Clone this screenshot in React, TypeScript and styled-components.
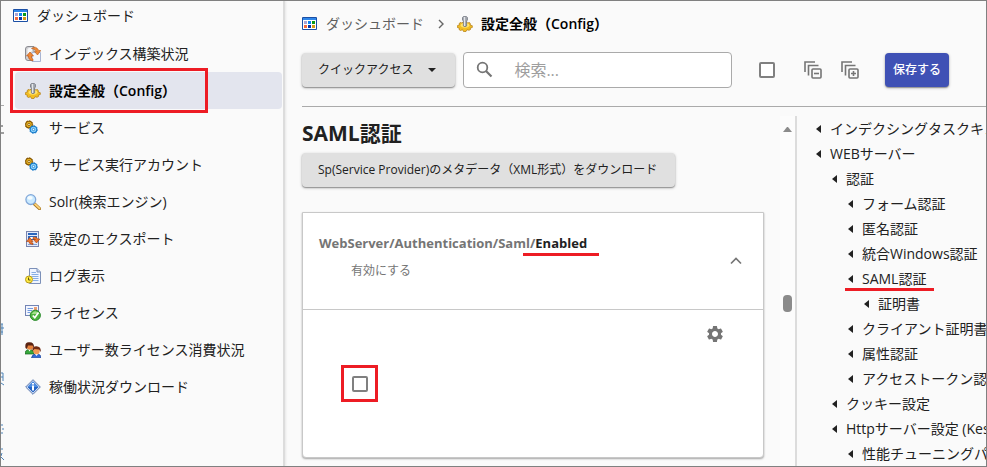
import React from "react";
import styled, { createGlobalStyle } from "styled-components";

const GlobalStyle = createGlobalStyle`
  *, *::before, *::after { box-sizing: border-box; }
  body { margin: 0; }
  body, button, input {
    font-family: "Open Sans", "Noto Sans CJK JP", sans-serif;
    font-size: 14px;
    line-height: 20px;
  }
`;

const Shell = styled.div`
  display: flex;
  height: 100vh;
  overflow: hidden;
  border: 1px solid #808080;
  background: #fafafa;
  color: #212121;
`;

/* ---------- page edge behind the drawer ---------- */

const Edge = styled.div`
  display: flex;
  flex-direction: column;
  flex: none;
  width: 3px;
  padding-top: 104px;
  overflow: hidden;
`;
const EdgeRule = styled.div`
  flex: none;
  height: 1px;
  margin-bottom: 13px;
  background: #aaa;
`;
const EdgeMark = styled.svg`
  flex: none;
  display: block;
`;

/* ---------- drawer ---------- */

const Drawer = styled.nav`
  flex: none;
  width: 281px;
  padding: 0 1px 0 11px;
  border-right: 2px solid #dcdcdc;
  box-shadow: 1px 0 2px rgba(0, 0, 0, 0.08);
`;
const NavHome = styled.a`
  display: flex;
  align-items: center;
  gap: 8px;
  height: 34px;
  padding-bottom: 4px;
  margin-left: -2px;
  color: inherit;
  text-decoration: none;
`;
const NavItem = styled.a<{ $active?: boolean }>`
  position: relative;
  display: flex;
  align-items: center;
  gap: 8px;
  height: 37px;
  padding-left: 10px;
  border-radius: 4px;
  color: ${(p) => (p.$active ? "#000" : "inherit")};
  font-weight: ${(p) => (p.$active ? 600 : 400)};
  background: ${(p) => (p.$active ? "#e3e5ee" : "transparent")};
  text-decoration: none;
  white-space: nowrap;
`;
const NavMarker = styled.span`
  position: absolute;
  left: -5px;
  top: -4px;
  width: 198px;
  height: 45px;
  border: 3px solid #ed1c24;
`;

/* ---------- main ---------- */

const Main = styled.main`
  display: flex;
  flex-direction: column;
  flex: 1;
  min-width: 0;
  padding-left: 17px;
`;
const Crumbs = styled.div`
  display: flex;
  align-items: center;
  height: 46px;
`;
const Crumb = styled.a<{ $current?: boolean }>`
  display: flex;
  align-items: center;
  gap: 8px;
  color: ${(p) => (p.$current ? "#000" : "#5f5f5f")};
  font-weight: ${(p) => (p.$current ? 600 : 400)};
  text-decoration: none;
`;
const CrumbSep = styled.svg`
  margin: 0 12px 0 13px;
`;
const Toolbar = styled.div`
  display: flex;
  align-items: center;
  height: 60px;
  padding: 0 37px 13px 0;
  border-bottom: 1px solid #aaa;
`;
const Button = styled.button<{ $primary?: boolean }>`
  display: flex;
  flex: none;
  align-items: center;
  gap: 14px;
  height: 34px;
  padding: ${(p) => (p.$primary ? "0 8px" : "0 18px 0 16px")};
  border: 0;
  border-radius: 4px;
  background: ${(p) => (p.$primary ? "#3f51b5" : "#e0e0e0")};
  color: ${(p) => (p.$primary ? "#fff" : "#212121")};
  font-size: 12px;
  font-weight: ${(p) => (p.$primary ? 500 : 400)};
  white-space: nowrap;
  box-shadow: 0 1px 3px rgba(0, 0, 0, 0.3), 0 1px 1px rgba(0, 0, 0, 0.25);
`;
const SearchBox = styled.label`
  display: flex;
  flex: 1;
  align-items: center;
  gap: 20px;
  min-width: 0;
  height: 36px;
  margin: 0 27px 0 8px;
  padding: 0 12px;
  border: 1px solid #aaa;
  border-radius: 4px;
  background: #fff;
`;
const SearchInput = styled.input`
  flex: 1;
  min-width: 0;
  padding: 0;
  border: 0;
  outline: 0;
  background: transparent;
  font-size: 16px;
  line-height: 24px;
  &::placeholder { color: #9e9e9e; opacity: 1; }
`;
const Check = styled.input.attrs({ type: "checkbox" })`
  appearance: none;
  flex: none;
  width: 16px;
  height: 16px;
  margin: 0;
  border: 2px solid #808080;
  border-radius: 2px;
  background: #fff;
`;
const IconButton = styled.button`
  display: flex;
  padding: 0;
  border: 0;
  background: transparent;
  color: #757575;
`;
const ToolIcons = styled.div`
  display: flex;
  flex: none;
  align-items: center;
  gap: 19px;
  margin: 0 26px 0 29px;
`;

const Columns = styled.div`
  display: flex;
  flex: 1;
  min-height: 0;
  padding-top: 9px;
`;
const Content = styled.section`
  flex: 1;
  min-width: 0;
  padding-top: 2px;
`;
const Title = styled.h1`
  margin: 0 0 5px;
  font-size: 21px;
  line-height: 30px;
  font-weight: 700;
`;
const Card = styled.article`
  margin: 25px 16px 0 0;
  border: 1px solid #c8c8c8;
  border-radius: 0 0 4px 4px;
  background: #fff;
  box-shadow: 0 1px 2px rgba(0, 0, 0, 0.35);
`;
const CardHead = styled.header`
  display: flex;
  align-items: center;
  justify-content: space-between;
  height: 97px;
  padding: 0 20px 0 16px;
  border-bottom: 1px solid #c8c8c8;
`;
const CardText = styled.div`
  padding-bottom: 8px;
`;
const Path = styled.h2`
  margin: 0;
  color: #757575;
  font-size: 13px;
  line-height: 20px;
  font-weight: 700;
`;
const PathLeaf = styled.span`
  position: relative;
  color: #212121;
`;
const LeafMarker = styled.span`
  position: absolute;
  left: -12px;
  right: -12px;
  top: 19px;
  height: 3px;
  background: #ed1c24;
`;
const Hint = styled.p`
  margin: 8px 0 0 32px;
  color: #757575;
  font-size: 12px;
`;
const CardBody = styled.div`
  display: flex;
  justify-content: space-between;
  align-items: flex-start;
  height: 147px;
  padding: 14px 38px 0;
`;
const CheckMarker = styled.label`
  display: flex;
  align-items: center;
  justify-content: center;
  width: 37px;
  height: 37px;
  margin-top: 41px;
  border: 3px solid #ed1c24;
`;

const ScrollTrack = styled.div`
  display: flex;
  flex: none;
  flex-direction: column;
  align-items: center;
  width: 15px;
  padding-top: 11px;
  background: #fcfcfc;
`;
const Gap = styled.div<{ $grow: number }>`
  flex: ${(p) => p.$grow} 0 0;
`;
const Thumb = styled.div`
  flex: none;
  width: 9px;
  height: 17px;
  border-radius: 4px;
  background: #8b8b8b;
`;

const Tree = styled.ul`
  flex: none;
  width: 191px;
  margin: 0;
  padding: 0 0 0 18px;
  border-left: 2px solid #dcdcdc;
  overflow: hidden;
  list-style: none;
`;
const TreeRow = styled.li<{ $level: number }>`
  padding-left: ${(p) => p.$level * 16}px;
`;
const TreeLink = styled.a`
  position: relative;
  display: inline-flex;
  align-items: center;
  gap: 8px;
  height: 25px;
  color: inherit;
  text-decoration: none;
  white-space: nowrap;
`;
const TreeMarker = styled.span`
  position: absolute;
  left: -2px;
  right: -8px;
  bottom: 0;
  height: 3px;
  background: #ed1c24;
`;

/* ---------- icons ---------- */

const Svg = ({ children, w = 16, h = 16 }: { children: React.ReactNode; w?: number; h?: number }) => (
  <svg width={w} height={h} viewBox={`0 0 ${w} ${h}`} aria-hidden="true">
    {children}
  </svg>
);

const DashboardIcon = () => (
  <Svg>
    <rect x="0" y="1" width="15" height="13" rx="1" fill="#1b4fa5" />
    <rect x="1" y="2" width="13" height="2" fill="#2f86e8" />
    <rect x="1" y="4" width="13" height="9" fill="#fff" />
    <rect x="2" y="5" width="3" height="3" fill="#a9a3d4" />
    <rect x="6" y="5" width="3" height="3" fill="#0a84f0" />
    <rect x="10" y="5" width="3" height="3" fill="#0a9a16" />
    <rect x="2" y="9" width="3" height="3" fill="#f56a3d" />
    <rect x="6" y="9" width="3" height="3" fill="#0736a8" />
    <rect x="10" y="9" width="3" height="3" fill="#d59b14" />
  </Svg>
);
const IndexIcon = () => (
  <Svg>
    <path d="M.5 3Q.5 .5 3 .5H9V14.500H3Q.5 14.500 .5 12Z" fill="#d0d0d3" stroke="#8a8a90" />
    <path d="M2.500 3.500Q3 1.500 7 1.500V5L2.500 9Z" fill="#f7f7f8" />
    <path d="M7 6.500H15.500V15.500H7Z" fill="#f2f6ff" stroke="#a9b5d3" />
    <path d="M6.500 2.500Q11-.8 13.800 4.500H15.800L12.500 9 9.500 5.500H11.300Q10 2.500 6.500 2.500Z" fill="#ef8a38" stroke="#b75716" strokeWidth=".6" />
    <path d="M8 14.800Q3 14 3.500 10H1.500L5 6 8.500 10H6.500Q6 12.500 8 13.200Z" fill="#ef8a38" stroke="#b94f12" strokeWidth=".6" />
  </Svg>
);
const ConfigIcon = () => (
  <Svg>
    <path
      d="M3 6.500L5 7 6 6H9.500L10.500 7 12.500 6.500 13.500 8 13 9 15.300 9.700V11.500L13.300 12 13.500 13.500 12 14.300 10 13.700 9 15.500H6.500L5.500 13.700 3.500 14.500 2 13.500 2.300 12 .3 11.500V9.700L2.500 9 2 8Z"
      fill="#f2bd22"
      stroke="#b27a10"
      strokeWidth=".7"
    />
    <ellipse cx="8" cy="9.300" rx="4.300" ry="2.400" fill="#ffe36d" />
    <path d="M6.400 10V5L5.500 4V1.500L6.500 .4H9.300L10.400 1.500V4L9.600 5V10Q8 11.300 6.400 10Z" fill="#a4a8b0" stroke="#70747d" strokeWidth=".8" />
    <path d="M7.500 1V10" stroke="#e4e6ea" strokeWidth="1.200" />
  </Svg>
);
const ServiceIcon = () => (
  <Svg>
    <circle cx="4" cy="4.500" r="3.300" fill="#e8b321" stroke="#825300" strokeWidth="1.100" />
    <circle cx="4" cy="4.500" r="3.900" fill="none" stroke="#946408" strokeWidth=".8" strokeDasharray="1.500 1.500" />
    <circle cx="4" cy="4.500" r="1.200" fill="#fff1bc" stroke="#825300" strokeWidth=".8" />
    <circle cx="8.500" cy="9.500" r="3.300" fill="#8bd3fd" stroke="#1478c8" strokeWidth="1.100" />
    <circle cx="8.500" cy="9.500" r="3.900" fill="none" stroke="#1478c8" strokeWidth=".8" strokeDasharray="1.500 1.500" />
    <circle cx="8.500" cy="9.500" r="1.200" fill="#effaff" stroke="#1478c8" strokeWidth=".8" />
  </Svg>
);
const SolrIcon = () => (
  <Svg>
    <path d="M9.500 10L14.500 14.700" stroke="#ac7920" strokeWidth="3.200" strokeLinecap="round" />
    <path d="M10 10.200L14.500 14.400" stroke="#ffd67c" strokeWidth="1.700" strokeLinecap="round" />
    <circle cx="5.800" cy="5.600" r="4.900" fill="#c9e9ff" stroke="#82a8d9" strokeWidth="1.300" />
    <ellipse cx="5" cy="3.900" rx="2.700" ry="1.800" fill="#f5fcff" />
  </Svg>
);
const ExportIcon = () => (
  <Svg>
    <rect x="1.500" y=".5" width="12" height="15" fill="#e4eafa" stroke="#7884ad" />
    <rect x="3" y="2" width="9" height="2" fill="#2b66bd" />
    <rect x="3" y="5" width="9" height="4" fill="#2b66bd" />
    <rect x="5" y="6" width="5" height="2" fill="#fff" />
    <rect x="3" y="13" width="9" height="1" fill="#7fa3dc" />
    <path d="M8 6.500Q11.500 5 12.500 8H14.800L11.500 12 8.500 8.500H10.500Q10 7.500 8 8Z" fill="#ed752d" stroke="#a43e0c" strokeWidth=".6" />
    <path d="M8 13.500Q4 13.500 3.700 10.500H1.500L4.800 6.500 8 10.500H6.200Q6.200 12 8 12Z" fill="#ed752d" stroke="#a43e0c" strokeWidth=".6" />
  </Svg>
);
const LogIcon = () => (
  <Svg>
    <path d="M4.500 .5H12L15.500 4V15.500H4.500Z" fill="#f0f5ff" stroke="#7c90b8" />
    <path d="M12 .5V4H15.500" fill="#c5d6f1" stroke="#7c90b8" />
    <path d="M6.500 4.500H11M6.500 6.500H13.500M6.500 8.500H13.500M8 10.500H13.500M8 12.500H13.500" stroke="#87aee4" />
    <circle cx="4" cy="11.500" r="3.500" fill="#ffeb43" stroke="#b89b16" />
    <path d="M3.500 9.500V12H5.500" fill="none" stroke="#5f5412" />
  </Svg>
);
const LicenseIcon = () => (
  <Svg>
    <rect x=".5" y=".5" width="13" height="10" fill="#f3f6ff" stroke="#7384b4" />
    <path d="M2.500 3.500H8M2.500 5.500H7M2.500 7.500H5" stroke="#739bde" />
    <rect x="9" y="2" width="3" height="3" fill="#ec9e76" />
    <circle cx="10.300" cy="10.300" r="5.100" fill="#4db43f" stroke="#278729" />
    <path d="M6.500 9Q10 3.500 14 9Z" fill="#a3df8c" />
    <path d="M7.800 10.500L9.800 12.700 13.500 7.500" fill="none" stroke="#fff" strokeWidth="1.700" />
  </Svg>
);
const UsersIcon = () => (
  <Svg>
    <path d="M0 12Q0 7.500 4.500 7.500T9 12Z" fill="#37a83c" stroke="#17611d" strokeWidth=".7" />
    <path d="M3 7L4.500 9.500 6 7" fill="#fff" />
    <circle cx="5" cy="4.500" r="3.200" fill="#e9823b" />
    <path d="M.5 6Q-.5 0 4 .3Q9.500-.2 9 6L7.500 3.500 3 3.500 1.800 7Z" fill="#592312" />
    <path d="M6.500 15.800Q7 12 11.500 12T16 15.800Z" fill="#316bd7" stroke="#173e92" strokeWidth=".7" />
    <path d="M10 12L11.500 14 13 12" fill="#fff" />
    <circle cx="11.500" cy="9" r="3.200" fill="#f39a52" />
    <path d="M7.500 9.500Q6.800 4 11.500 4.200T15.800 10L14 7.500 9.500 7Z" fill="#732b12" />
  </Svg>
);
const StatusIcon = () => (
  <Svg>
    <path d="M8 .7L15.300 8 8 15.300 .7 8Z" fill="#fff" stroke="#5272ad" strokeLinejoin="round" />
    <path d="M8 2.300L13.700 8 8 13.700 2.300 8Z" fill="#2463c4" />
    <path d="M8 2.300L13.700 8H2.300Z" fill="#4c8be0" />
    <path d="M8 4V5.500M8 6.500V11.500" stroke="#fff" strokeWidth="2" />
  </Svg>
);
const StackIcon = ({ plus }: { plus?: boolean }) => (
  <Svg w={18} h={18}>
    <g fill="none" stroke="currentColor" strokeWidth="1.600">
      <path d="M1 11V1H11M4.500 14.500V4.500H14.500" />
      <rect x="8" y="8" width="9" height="9" rx="1" />
      <path d={plus ? "M10 12.500H15M12.500 10V15" : "M10 12.500H15"} />
    </g>
  </Svg>
);
const GearIcon = () => (
  <svg width="20" height="20" viewBox="0 0 24 24" aria-hidden="true">
    <path
      fill="currentColor"
      d="M19.140 12.940c.04-.3.060-.61.060-.94 0-.32-.02-.64-.07-.94l2.030-1.580c.18-.14.23-.41.12-.61l-1.920-3.320c-.12-.22-.37-.29-.59-.22l-2.390.96c-.5-.38-1.030-.7-1.620-.94l-.36-2.540c-.04-.24-.24-.41-.48-.41h-3.840c-.24 0-.43.17-.47.41l-.36 2.540c-.59.24-1.130.57-1.620.94l-2.390-.96c-.22-.08-.47 0-.59.22L2.740 8.870c-.12.21-.08.47.12.61l2.030 1.580c-.05.3-.09.63-.09.94s.02.64.07.94l-2.030 1.580c-.18.14-.23.41-.12.61l1.920 3.320c.12.22.37.29.59.22l2.390-.96c.5.38 1.030.7 1.620.94l.36 2.540c.05.24.24.41.48.41h3.840c.24 0 .44-.17.47-.41l.36-2.540c.59-.24 1.130-.56 1.620-.94l2.390.96c.22.08.47 0 .59-.22l1.920-3.320c.12-.22.07-.47-.12-.61zM12 15.600c-1.980 0-3.600-1.620-3.600-3.600s1.620-3.600 3.600-3.600 3.600 1.620 3.600 3.600-1.620 3.600-3.600 3.600"
    />
  </svg>
);

const navItems = [
  { label: "インデックス構築状況", Icon: IndexIcon },
  { label: "設定全般（Config）", Icon: ConfigIcon, active: true },
  { label: "サービス", Icon: ServiceIcon },
  { label: "サービス実行アカウント", Icon: ServiceIcon },
  { label: "Solr(検索エンジン)", Icon: SolrIcon },
  { label: "設定のエクスポート", Icon: ExportIcon },
  { label: "ログ表示", Icon: LogIcon },
  { label: "ライセンス", Icon: LicenseIcon },
  { label: "ユーザー数ライセンス消費状況", Icon: UsersIcon },
  { label: "稼働状況ダウンロード", Icon: StatusIcon },
];

const treeItems = [
  { label: "インデクシングタスクキュー", level: 0 },
  { label: "WEBサーバー", level: 0 },
  { label: "認証", level: 1 },
  { label: "フォーム認証", level: 2 },
  { label: "匿名認証", level: 2 },
  { label: "統合Windows認証", level: 2 },
  { label: "SAML認証", level: 2, marked: true },
  { label: "証明書", level: 3 },
  { label: "クライアント証明書認証", level: 2 },
  { label: "属性認証", level: 2 },
  { label: "アクセストークン認証", level: 2 },
  { label: "クッキー設定", level: 1 },
  { label: "Httpサーバー設定 (Kestrel)", level: 1 },
  { label: "性能チューニングパラメータ", level: 2 },
];

export default function App() {
  return (
    <>
      <GlobalStyle />
      <Shell>
        <Edge aria-hidden="true">
          <EdgeRule />
          <EdgeMark width="3" height="348" viewBox="0 0 3 348">
            <path d="M0 7H2M0 14H3" stroke="#424242" />
            <path d="M0 205H2M0 209H3M0 213H2M1 205V216M0 254H2M0 258H2M2 254V262M0 264L3 266M0 306H2M1 310H3M0 314H2M0 330H2M1 334L0 337M0 338L3 341" fill="none" stroke="#4d83b7" />
          </EdgeMark>
        </Edge>
        <Drawer>
          <NavHome href="#">
            <DashboardIcon />
            ダッシュボード
          </NavHome>
          {navItems.map(({ label, Icon, active }) => (
            <NavItem key={label} href="#" $active={active}>
              <Icon />
              {label}
              {active && <NavMarker />}
            </NavItem>
          ))}
        </Drawer>
        <Main>
          <Crumbs>
            <Crumb href="#">
              <DashboardIcon />
              ダッシュボード
            </Crumb>
            <CrumbSep width="8" height="10" viewBox="0 0 8 10" aria-hidden="true">
              <path d="M2 1L6 5L2 9" fill="none" stroke="#666" strokeWidth="1.400" />
            </CrumbSep>
            <Crumb href="#" $current>
              <ConfigIcon />
              設定全般（Config）
            </Crumb>
          </Crumbs>
          <Toolbar>
            <Button type="button">
              クイックアクセス
              <Svg w={10} h={6}>
                <path d="M1 1H9L5 5Z" fill="#212121" />
              </Svg>
            </Button>
            <SearchBox>
              <Svg w={18} h={18}>
                <circle cx="6.500" cy="6.500" r="4.800" fill="none" stroke="#757575" strokeWidth="1.800" />
                <path d="M10 10L15.500 15.500" stroke="#757575" strokeWidth="2.200" />
              </Svg>
              <SearchInput type="text" placeholder="検索..." aria-label="検索" />
            </SearchBox>
            <Check aria-label="すべて選択" />
            <ToolIcons>
              <IconButton type="button" aria-label="すべて折りたたむ">
                <StackIcon />
              </IconButton>
              <IconButton type="button" aria-label="すべて展開">
                <StackIcon plus />
              </IconButton>
            </ToolIcons>
            <Button type="button" $primary>
              保存する
            </Button>
          </Toolbar>
          <Columns>
            <Content>
              <Title>SAML認証</Title>
              <Button type="button">Sp(Service Provider)のメタデータ（XML形式）をダウンロード</Button>
              <Card>
                <CardHead>
                  <CardText>
                    <Path>
                      WebServer/Authentication/Saml/
                      <PathLeaf>
                        Enabled
                        <LeafMarker />
                      </PathLeaf>
                    </Path>
                    <Hint>有効にする</Hint>
                  </CardText>
                  <IconButton type="button" aria-label="折りたたむ">
                    <Svg w={14} h={8}>
                      <path d="M2 6.500L7 1.500L12 6.500" fill="none" stroke="currentColor" strokeWidth="1.700" />
                    </Svg>
                  </IconButton>
                </CardHead>
                <CardBody>
                  <CheckMarker>
                    <Check aria-label="有効にする" />
                  </CheckMarker>
                  <IconButton type="button" aria-label="設定">
                    <GearIcon />
                  </IconButton>
                </CardBody>
              </Card>
            </Content>
            <ScrollTrack>
              <Svg w={9} h={5}>
                <path d="M0 5L4 0H5L9 5Z" fill="#8b8b8b" />
              </Svg>
              <Gap $grow={163} />
              <Thumb />
              <Gap $grow={154} />
            </ScrollTrack>
            <Tree>
              {treeItems.map(({ label, level, marked }) => (
                <TreeRow key={label} $level={level}>
                  <TreeLink href="#">
                    <Svg w={7} h={8}>
                      <path d="M6 0V8L1 4Z" fill="#212121" />
                    </Svg>
                    {label}
                    {marked && <TreeMarker />}
                  </TreeLink>
                </TreeRow>
              ))}
            </Tree>
          </Columns>
        </Main>
      </Shell>
    </>
  );
}
